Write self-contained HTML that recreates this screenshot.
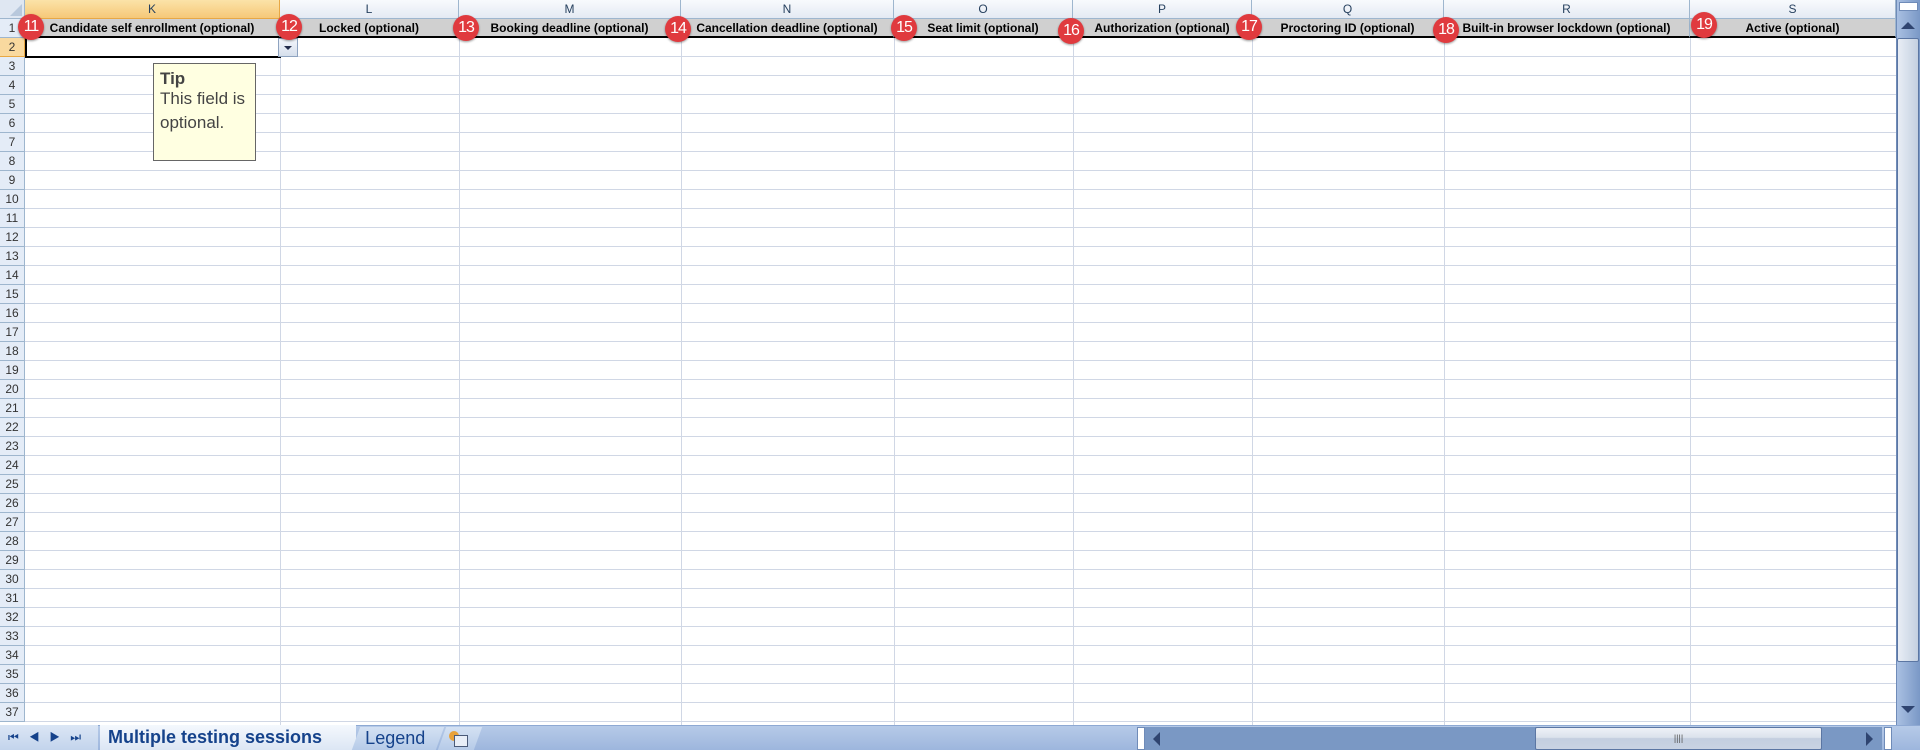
<!DOCTYPE html>
<html><head><meta charset="utf-8"><style>
*{margin:0;padding:0;box-sizing:border-box}
body{width:1920px;height:750px;overflow:hidden;background:#fff;position:relative;font-family:"Liberation Sans",sans-serif}
.a{position:absolute}
.colh{top:0;height:19px;background:linear-gradient(#f8fafd,#e4eaf3);border-right:1px solid #9eb6ce;border-bottom:1px solid #9eb6ce;font-size:12px;color:#27415f;text-align:center;line-height:19px}
.h1{top:19px;height:19px;background:#d0d0d0;border-bottom:2px solid #000;border-right:1px solid #9eb6ce;font-size:12px;font-weight:bold;text-align:center;line-height:18px;color:#000}
.rh{left:0;width:25px;height:19px;background:#e4ecf7;border-bottom:1px solid #9eb6ce;border-right:1px solid #9eb6ce;font-size:12px;color:#333;text-align:center;line-height:19px}
.vl{top:38px;height:687px;width:1px;background:#d0d7e5}
.b{width:26px;height:26px;border-radius:50%;background:#e03a3e;color:#fff;font-size:16px;text-align:center;line-height:26px;box-shadow:0 1px 2px rgba(0,0,0,.4);letter-spacing:-1px}
</style></head><body>
<div class="a" style="left:0;top:0;width:25px;height:19px;background:#dfe7f2;border-right:1px solid #9eb6ce;border-bottom:1px solid #9eb6ce"><div class="a" style="right:2px;bottom:2px;width:0;height:0;border-left:12px solid transparent;border-bottom:12px solid #b8c8dc"></div></div>
<!-- gridlines -->
<div class="a" style="left:25px;top:38px;width:1871px;height:687px;background:repeating-linear-gradient(to bottom,transparent 0,transparent 18px,#d0d7e5 18px,#d0d7e5 19px)"></div>
<div class="a vl" style="left:280px"></div><div class="a vl" style="left:459px"></div><div class="a vl" style="left:681px"></div><div class="a vl" style="left:894px"></div><div class="a vl" style="left:1073px"></div><div class="a vl" style="left:1252px"></div><div class="a vl" style="left:1444px"></div><div class="a vl" style="left:1690px"></div>
<!-- col headers -->
<div class="a colh" style="left:25px;width:255px;background:linear-gradient(#fbe3a8,#f6c878);border-color:#e8a844">K</div>
<div class="a colh" style="left:280px;width:179px">L</div>
<div class="a colh" style="left:459px;width:222px">M</div>
<div class="a colh" style="left:681px;width:213px">N</div>
<div class="a colh" style="left:894px;width:179px">O</div>
<div class="a colh" style="left:1073px;width:179px">P</div>
<div class="a colh" style="left:1252px;width:192px">Q</div>
<div class="a colh" style="left:1444px;width:246px">R</div>
<div class="a colh" style="left:1690px;width:206px">S</div>
<!-- row1 -->
<div class="a h1" style="left:25px;width:255px">Candidate self enrollment (optional)</div>
<div class="a h1" style="left:280px;width:179px">Locked (optional)</div>
<div class="a h1" style="left:459px;width:222px">Booking deadline (optional)</div>
<div class="a h1" style="left:681px;width:213px">Cancellation deadline (optional)</div>
<div class="a h1" style="left:894px;width:179px">Seat limit (optional)</div>
<div class="a h1" style="left:1073px;width:179px">Authorization (optional)</div>
<div class="a h1" style="left:1252px;width:192px">Proctoring ID (optional)</div>
<div class="a h1" style="left:1444px;width:246px">Built-in browser lockdown (optional)</div>
<div class="a h1" style="left:1690px;width:206px">Active (optional)</div>
<!-- row headers -->
<div id="rows"></div>
<script>
var h='';for(var i=1;i<=37;i++){var s=i==2?'background:#f9d99f;border-color:#e8a844;':'';h+='<div class="a rh" style="top:'+(19*i)+'px;'+s+'">'+i+'</div>';}
document.getElementById('rows').outerHTML=h;
</script>
<!-- selected cell -->
<div class="a" style="left:25px;top:37px;width:256px;height:21px;border:2px solid #000;border-top:1px solid #000"></div>
<div class="a" style="left:278px;top:38px;width:20px;height:19px;background:linear-gradient(#f3f6fb,#d6dfec);border:1px solid #8ea3c0"><div class="a" style="left:5px;top:7px;border-left:4px solid transparent;border-right:4px solid transparent;border-top:4px solid #222b4a"></div></div>
<!-- tooltip -->
<div class="a" style="left:153px;top:63px;width:103px;height:98px;background:#ffffe1;border:1px solid #666;padding:7px 6px;color:#444;font-size:17px;line-height:24px"><div style="font-weight:bold;line-height:16px">Tip</div>This field is optional.</div>
<!-- badges -->
<div class="a b" style="left:18px;top:14px">11</div>
<div class="a b" style="left:276px;top:14px">12</div>
<div class="a b" style="left:453px;top:15px">13</div>
<div class="a b" style="left:665px;top:16px">14</div>
<div class="a b" style="left:891px;top:15px">15</div>
<div class="a b" style="left:1058px;top:18px">16</div>
<div class="a b" style="left:1236px;top:14px">17</div>
<div class="a b" style="left:1433px;top:17px">18</div>
<div class="a b" style="left:1691px;top:12px">19</div>
<!-- vertical scrollbar -->
<div class="a" style="left:1896px;top:0;width:24px;height:725px;background:linear-gradient(to right,#a9c0e2,#7a98c6);border-left:1px solid #6f8bb8"></div>
<div class="a" style="left:1899px;top:2px;width:19px;height:9px;background:#fff;border:1px solid #6f8bb8"></div>
<div class="a" style="left:1901px;top:22px;border-left:7px solid transparent;border-right:7px solid transparent;border-bottom:7px solid #2f4470"></div>
<div class="a" style="left:1897px;top:38px;width:22px;height:624px;background:linear-gradient(to right,#e8edf5,#d6dfeb 50%,#c3cfe0);border:1px solid #5b76a3;border-radius:2px"></div>
<div class="a" style="left:1901px;top:706px;border-left:7px solid transparent;border-right:7px solid transparent;border-top:7px solid #2f4470"></div>
<!-- bottom bar -->
<div class="a" style="left:0;top:725px;width:1920px;height:25px;background:linear-gradient(#b6cae8,#9db6dd);border-top:1px solid #8ea9d3"></div>
<div class="a" style="left:0;top:725px;width:98px;height:25px;background:linear-gradient(#dbe6f5,#c3d4ec);color:#15428b;font-size:12px;line-height:25px;letter-spacing:10px;padding-left:8px">⏮◀▶⏭</div>
<div class="a" style="left:100px;top:725px;width:256px;height:25px;background:linear-gradient(#f4f8fd,#dce6f4);color:#15428b;font-weight:bold;font-size:18px;line-height:24px;padding-left:8px">Multiple testing sessions</div>
<div class="a" style="left:356px;top:727px;width:84px;height:23px;background:linear-gradient(#d4e1f3,#b6cbe8);color:#15428b;font-size:18px;line-height:22px;padding-left:9px;transform:skewX(-20deg)"><span style="display:inline-block;transform:skewX(20deg)">Legend</span></div>
<div class="a" style="left:442px;top:727px;width:36px;height:23px;background:linear-gradient(#d4e1f3,#b6cbe8);transform:skewX(-20deg)"></div>
<div class="a" style="left:449px;top:731px;width:10px;height:10px;border-radius:50%;background:#e8a23a"></div>
<div class="a" style="left:454px;top:735px;width:14px;height:12px;background:#e8eef7;border:1px solid #4a5a78"></div>
<!-- horizontal scrollbar -->
<div class="a" style="left:1137px;top:727px;width:8px;height:23px;background:#fff;border:1px solid #6f8bb8"></div>
<div class="a" style="left:1145px;top:727px;width:737px;height:23px;background:#7a98c4"></div>
<div class="a" style="left:1153px;top:732px;border-top:7px solid transparent;border-bottom:7px solid transparent;border-right:7px solid #2f4470"></div>
<div class="a" style="left:1535px;top:727px;width:287px;height:23px;background:linear-gradient(#eef1f7,#dbe2ec 45%,#c3cedf 50%,#c9d3e2);border:1px solid #5b76a3;border-radius:2px;text-align:center;font-size:9px;line-height:21px;color:#555">||||</div>
<div class="a" style="left:1866px;top:732px;border-top:7px solid transparent;border-bottom:7px solid transparent;border-left:7px solid #2f4470"></div>
<div class="a" style="left:1884px;top:727px;width:8px;height:23px;background:#fff;border:1px solid #6f8bb8"></div>
</body></html>
